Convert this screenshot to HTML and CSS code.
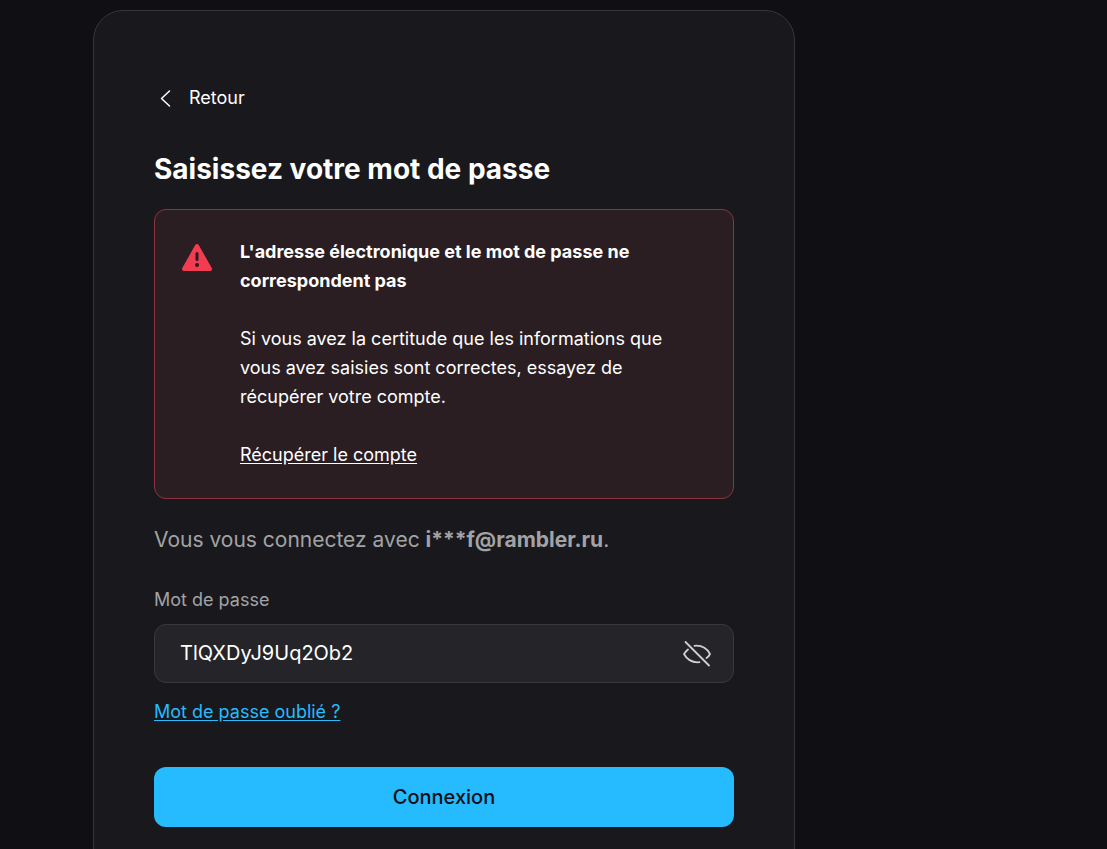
FILE: index.html
```
<!DOCTYPE html>
<html lang="fr">
<head>
  <meta charset="UTF-8">
  <meta name="viewport" content="width=device-width, initial-scale=1.0">
  <title>Connexion</title>
  <link rel="stylesheet" href="styles.css">
</head>
<body>

  <main class="login-card">
    <button type="button" class="back">
      <svg width="24" height="24" viewBox="0 0 24 24" fill="none" stroke="currentColor" stroke-width="1.5" stroke-linecap="round" stroke-linejoin="round" aria-hidden="true">
        <path d="M15.5 5L7.500 12.500L15.500 20"/>
      </svg>
      Retour
    </button>

    <h1>Saisissez votre mot de passe</h1>

    <div class="alert" role="alert">
      <svg class="alert-icon" width="32" height="32" viewBox="0 0 32 32" aria-hidden="true">
        <path d="M16 4L29 27H3Z" fill="#f23c52" stroke="#f23c52" stroke-width="4" stroke-linejoin="round"/>
        <path d="M16 11.500V17.500" stroke="#2a1c20" stroke-width="3" stroke-linecap="round"/>
        <circle cx="16" cy="23" r="2" fill="#2a1c20"/>
      </svg>
      <div class="alert-body">
        <p><strong>L'adresse électronique et le mot de passe ne correspondent pas</strong></p>
        <p>Si vous avez la certitude que les informations que vous avez saisies sont correctes, essayez de récupérer votre compte.</p>
        <p><a href="#">Récupérer le compte</a></p>
      </div>
    </div>

    <p class="account">Vous vous connectez avec <strong>i***f@rambler.ru</strong>.</p>

    <form class="login-form">
      <label for="password">Mot de passe</label>
      <div class="field">
        <input type="text" id="password" value="TlQXDyJ9Uq2Ob2" autocomplete="off" spellcheck="false">
        <button type="button" class="toggle" aria-label="Masquer le mot de passe">
          <svg width="30" height="30" viewBox="0 0 30 30" fill="none" stroke="currentColor" stroke-width="1.8" stroke-linecap="round" stroke-linejoin="round" aria-hidden="true">
            <path d="M3.500 3L27 26.500"/>
            <path d="M6 10.500C4.200 12 2.800 13.800 2 15C5 20.500 10.500 23.800 17.500 23.200"/>
            <path d="M12.500 6.800C19.500 6.200 25 9.500 28 15C27.300 16.500 26 18 24.500 19"/>
          </svg>
        </button>
      </div>
      <a class="forgot" href="#">Mot de passe oublié ?</a>
      <button type="submit" class="submit">Connexion</button>
    </form>
  </main>

</body>
</html>
```
FILE: styles.css
```
* {
  box-sizing: border-box;
  margin: 0;
  padding: 0;
}

html {
  scrollbar-width: none;
}

body {
  background-color: #101014;
  color: #fff;
  font-family: Inter, sans-serif;
  font-size: 18px;
  line-height: 29px;
  padding: 10px 312px 0 93px;
}

button,
input {
  font-family: inherit;
  border: none;
}

button {
  cursor: pointer;
}

.login-card {
  padding: 72px 60px 60px;
  background-color: #19191d;
  border: 1px solid #35353a;
  border-radius: 30px;
}

.back {
  display: flex;
  align-items: center;
  gap: 11px;
  background: none;
  color: #fff;
  font-size: 18px;
  line-height: 29px;
}

h1 {
  margin-top: 38px;
  font-size: 28px;
  line-height: 38px;
}

.alert {
  display: flex;
  gap: 27px;
  margin-top: 21px;
  padding: 27px 26px 29px;
  background-color: #2a1e22;
  border: 1px solid #8f3341;
  border-radius: 12px;
}

.alert-icon {
  flex-shrink: 0;
  margin-top: 5px;
}

.alert-body p + p {
  margin-top: 29px;
}

.alert a {
  color: #fff;
  text-underline-offset: 2px;
}

.account {
  margin-top: 26px;
  color: #a3a3a6;
  font-size: 21px;
  line-height: 30px;
}

.login-form {
  display: flex;
  flex-direction: column;
  margin-top: 30px;
}

.login-form label {
  color: #a3a3a6;
}

.field {
  display: flex;
  align-items: center;
  margin-top: 10px;
  padding-right: 21px;
  background-color: #252529;
  border: 1px solid #39393d;
  border-radius: 12px;
}

.field input {
  flex: 1;
  min-width: 0;
  height: 57px;
  padding: 0 0 2px 25px;
  background: none;
  color: #fff;
  font-size: 20px;
  outline: none;
}

.toggle {
  display: flex;
  background: none;
  color: #d0d0d3;
}

.forgot {
  align-self: flex-start;
  margin-top: 14px;
  color: #26bbff;
  text-underline-offset: 2px;
}

.submit {
  height: 60px;
  margin-top: 41px;
  background-color: #26bbff;
  border-radius: 12px;
  color: #101014;
  font-size: 20px;
  font-weight: 500;
}
```
